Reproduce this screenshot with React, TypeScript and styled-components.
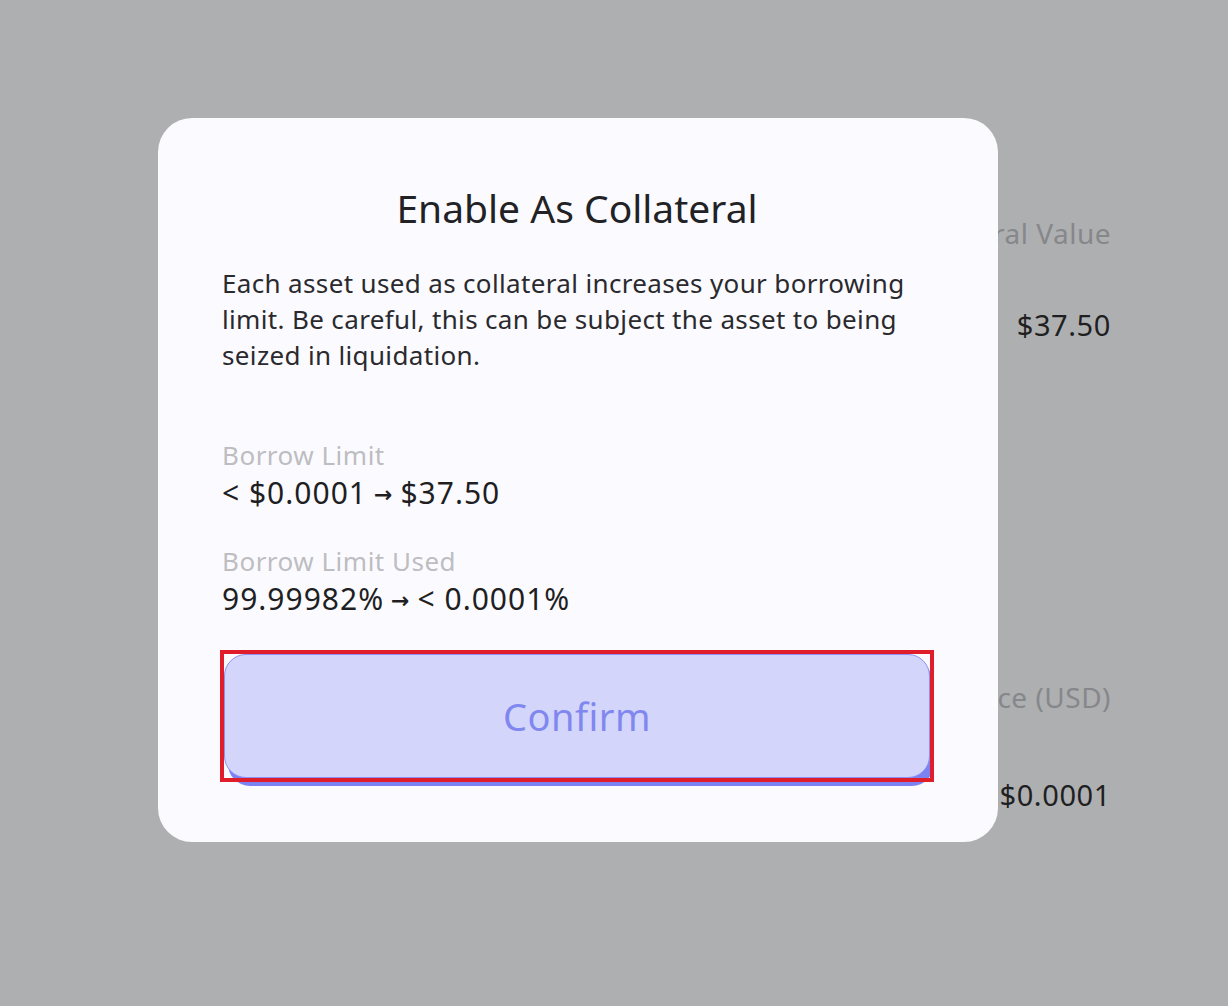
import React from "react";
import styled, { createGlobalStyle } from "styled-components";

const FONT = `"Noto Sans", Lato, "Liberation Sans", sans-serif`;

const Global = createGlobalStyle`
  html, body { margin: 0; padding: 0; }
  body {
    background: #aeafb1;
    font-family: ${FONT};
    -webkit-font-smoothing: antialiased;
  }
`;

const Page = styled.div`
  position: relative;
  width: 1228px;
  height: 1006px;
  overflow: hidden;
  background: #aeafb1;
`;

const BackColumn = styled.div`
  display: flex;
  flex-direction: column;
  align-items: flex-end;
  padding: 215px 117px 0 0;
`;

const BackLabel = styled.div<{ $gap?: number }>`
  font-size: 28px;
  line-height: 36px;
  letter-spacing: 0.5px;
  color: #86878a;
  margin-top: ${(p) => p.$gap ?? 0}px;
`;

const BackValue = styled.div<{ $gap: number }>`
  font-size: 29px;
  line-height: 36px;
  letter-spacing: 0.6px;
  color: #1f1f22;
  margin-top: ${(p) => p.$gap}px;
`;

const Overlay = styled.div`
  position: absolute;
  inset: 0;
  padding: 118px 0 0 158px;
  box-sizing: border-box;
`;

const Modal = styled.div`
  width: 840px;
  box-sizing: border-box;
  background: #fbfbff;
  border-radius: 34px;
  padding: 68px 66px 60px 64px;
  display: flex;
  flex-direction: column;
`;

const Title = styled.h2`
  margin: 0;
  text-align: center;
  font-size: 39px;
  line-height: 44px;
  font-weight: 400;
  color: #222226;
`;

const Body = styled.p`
  margin: 35px 0 0;
  font-size: 26px;
  line-height: 36px;
  letter-spacing: 0.35px;
  color: #2a2a2e;
`;

const Stat = styled.div<{ $gap: number }>`
  display: flex;
  flex-direction: column;
  gap: 2px;
  margin-top: ${(p) => p.$gap}px;
`;

const StatLabel = styled.div`
  font-size: 26px;
  line-height: 36px;
  letter-spacing: 0.5px;
  color: #bdbdc2;
`;

const StatValue = styled.div`
  font-size: 30px;
  line-height: 36px;
  letter-spacing: 1px;
  color: #1f1f23;
`;

const Arrow = styled.span`
  font-family: "DejaVu Sans", sans-serif;
  font-size: 22px;
  font-weight: 700;
  margin: 0 7px;
  position: relative;
  top: -2px;
`;

const Highlight = styled.div`
  position: relative;
  margin-top: 29px;
  width: 714px;
  margin-left: -2px;
  &::after {
    content: "";
    position: absolute;
    inset: 0;
    border: 4px solid #e01e2b;
    pointer-events: none;
  }
`;

const ConfirmButton = styled.button`
  display: block;
  margin: 4px;
  height: 124px;
  width: 706px;
  border: 1px solid #8a90f4;
  border-radius: 22px;
  background: #d3d5fb;
  box-shadow: 4px 8px 0 #7c82f2;
  color: #8088f0;
  font-family: ${FONT};
  font-size: 38px;
  letter-spacing: 0.5px;
  cursor: pointer;
`;

export default function App() {
  return (
    <Page>
      <Global />
      <BackColumn>
        <BackLabel>Collateral Value</BackLabel>
        <BackValue $gap={56}>$37.50</BackValue>
        <BackLabel $gap={336}>Balance (USD)</BackLabel>
        <BackValue $gap={62}>$0.0001</BackValue>
      </BackColumn>
      <Overlay>
        <Modal>
          <Title>Enable As Collateral</Title>
          <Body>
            Each asset used as collateral increases your borrowing limit. Be
            careful, this can be subject the asset to being seized in
            liquidation.
          </Body>
          <Stat $gap={64}>
            <StatLabel>Borrow Limit</StatLabel>
            <StatValue>
              &lt; $0.0001<Arrow>→</Arrow>$37.50
            </StatValue>
          </Stat>
          <Stat $gap={28}>
            <StatLabel>Borrow Limit Used</StatLabel>
            <StatValue>
              99.99982%<Arrow>→</Arrow>&lt; 0.0001%
            </StatValue>
          </Stat>
          <Highlight>
            <ConfirmButton>Confirm</ConfirmButton>
          </Highlight>
        </Modal>
      </Overlay>
    </Page>
  );
}
